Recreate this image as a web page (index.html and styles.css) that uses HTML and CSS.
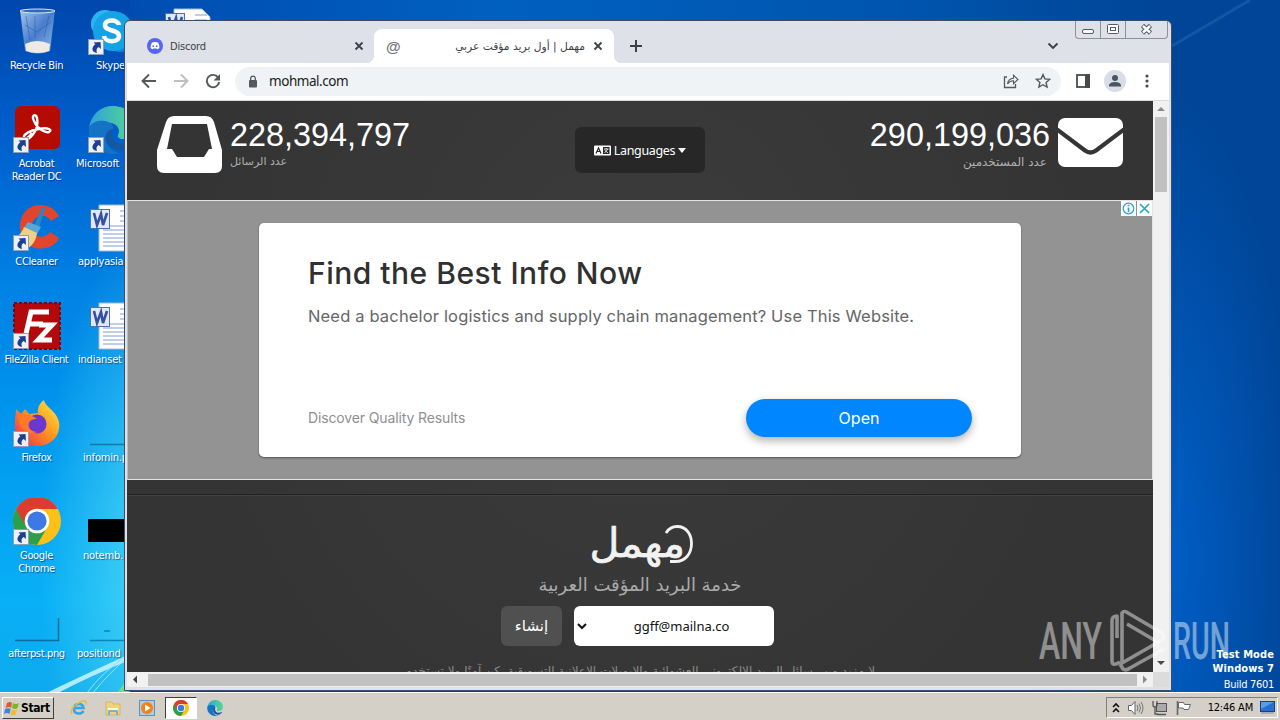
FILE: index.html
```html
<!doctype html>
<html>
<head>
<meta charset="utf-8">
<title>مهمل | أول بريد مؤقت عربي</title>
<link rel="stylesheet" href="styles.css">
</head>
<body>

<!-- shared icons -->
<svg class="defs" width="0" height="0">
<defs>
<linearGradient id="ff" x1="1" y1="0" x2="0" y2="1"><stop offset="0" stop-color="#fff04a"/><stop offset=".45" stop-color="#ff9a1f"/><stop offset="1" stop-color="#f0205a"/></linearGradient>
<linearGradient id="edge" x1="0" y1="0" x2="1" y2="0"><stop offset="0" stop-color="#2ba3dc"/><stop offset="1" stop-color="#58d98a"/></linearGradient>
<linearGradient id="bin" x1="0" y1="0" x2="1" y2="1"><stop offset="0" stop-color="#b9d3f2"/><stop offset=".5" stop-color="#4f83cf"/><stop offset="1" stop-color="#a9c4e8"/></linearGradient>
<symbol id="shortcut" viewBox="0 0 16 16">
<rect width="16" height="16" fill="#8aa0b8"/><rect x="1" y="1" width="14" height="14" fill="#edf1f6"/>
<path d="M5.500 3.500L12.500 3l.5 7-2.300-2C8.500 9 8 11 9 14 3.500 13.500 3 8.500 7.300 5.300z" fill="#1c3f8f"/>
</symbol>
<symbol id="chrome" viewBox="0 0 48 48">
<circle cx="24" cy="24" r="24" fill="#fbc116"/>
<path d="M24 24L3.200 12A24 24 0 0 0 24 48L34.400 30z" fill="#2f9e49"/>
<path d="M3.200 12A24 24 0 0 1 44.800 12H24L13.600 30z" fill="#dc3b2e"/>
<circle cx="24" cy="24" r="12.300" fill="#fff"/><circle cx="24" cy="24" r="9.600" fill="#3c79e6"/>
</symbol>
<symbol id="edgeicon" viewBox="0 0 48 48">
<path d="M1 22C3 8 13 0 25 0c13 0 23 9 23 20 0 8-6 13-13 13-4 0-6-2-5-4 3-5-1-12-8-12-8 0-16 3-21 5z" fill="url(#edge)"/>
<path d="M1 21c4-6 11-7 16-6 8 1 9 7 8 10-6 0-9 5-7 11 3 7 10 12 17 11C20 52-2 42 1 21z" fill="#1473c4"/>
<path d="M18 30c0 9 8 15 16 14 5-1 9-4 12-9-10 6-20 4-22-6-1-3 1-5 2-6-4 0-8 2-8 7z" fill="#1557a0"/>
</symbol>
<symbol id="worddoc" viewBox="0 0 48 48">
<path d="M11 1h28l8 8v38H11z" fill="#fff" stroke="#a8b6d0"/>
<path d="M32 7h12M32 12h12M32 17h12M15 22h29M15 26h29M15 30h29M15 34h29M15 38h29M15 42h29" stroke="#a9bfe4" stroke-width="1.400"/>
<rect x="2.500" y="5.500" width="19" height="19" fill="#dfe9fa" stroke="#4c6fb8"/>
<path d="M6 9l3 12 4-11 2 11 4-12" fill="none" stroke="#34509f" stroke-width="2.600"/>
</symbol>
</defs>
</svg>

<div class="desktop">

<svg class="rays" width="1280" height="720" viewBox="0 0 1280 720">
<path d="M44 694Q90 672 130 654L130 660Q90 676 56 694z" fill="#c9f4ff" opacity=".85"/>
<path d="M86 694Q104 670 128 655M92 694Q110 672 128 657" stroke="#8be6ff" fill="none"/>
<path d="M118 692L128 678V692z" fill="#6fe08a"/>
<path d="M1172 46L1250 0" stroke="#3479bd" stroke-width="3" opacity=".35"/>
</svg>

<div class="icons">
<div class="icon">
<svg width="48" height="48" viewBox="0 0 48 48"><path d="M7 2h35l-5 41q-12 5-25 0z" fill="url(#bin)" opacity=".9"/><ellipse cx="24.500" cy="3" rx="17.500" ry="2" fill="#3468b8" stroke="#dbe7f5"/><path d="M12 36q12-6 25 0l-1 7q-12 4-23 0z" fill="#efeae4"/><path d="M13 8l4 24M22 8v22M36 8l-5 21M12 17l12 7 14-10" stroke="#2859aa" opacity=".5" fill="none"/></svg>
<div class="label">Recycle Bin</div>
</div>
<div class="icon">
<svg width="48" height="48" viewBox="0 0 48 48"><rect x="2" y="0" width="45" height="43" rx="6" fill="#b30b00"/><path d="M12 35c8-4 14-13 12-23-1-5-6-3-3 3 4 9 12 12 15 11 4-2-1-5-10-3-8 1-16 5-15 9 1 3 6-2 8-5" fill="none" stroke="#fff" stroke-width="2.400"/><use href="#shortcut" x="0" y="31" width="16" height="16"/></svg>
<div class="label">Acrobat<br>Reader DC</div>
</div>
<div class="icon">
<svg width="48" height="48" viewBox="0 0 48 48"><path d="M46 12C38-3 14-3 8 15c-5 17 8 33 24 29 7-1 12-5 14-10l-9-6c-5 8-18 6-18-6 0-11 14-14 19-5z" fill="#e2452e"/><path d="M29 3l3 1-6 20-5-2z" fill="#2c86c4"/><path d="M15 18l13 5-4 7-13-6z" fill="#57a9d4"/><path d="M11 23l13 6c-1 7-4 12-9 15L1 35c5-3 8-7 10-12z" fill="#f3cf83"/><use href="#shortcut" x="0" y="31" width="16" height="16"/></svg>
<div class="label">CCleaner</div>
</div>
<div class="icon">
<svg width="48" height="48" viewBox="0 0 48 48"><rect x="1" y="1" width="46" height="46" fill="#b3080c" stroke="#7f0508" stroke-width="2" stroke-dasharray="3 2"/><path d="M12 36L18 10h18M15 22h15M26 23h13L25 38h14" fill="none" stroke="#fff" stroke-width="5"/><use href="#shortcut" x="0" y="31" width="16" height="16"/></svg>
<div class="label">FileZilla Client</div>
</div>
<div class="icon">
<svg width="48" height="48" viewBox="0 0 48 48"><path d="M3 9l5 5 4-5 4 5 9-1C24 7 28 2 31 0c0 6 13 11 15 22 2 14-8 24-22 24S0 35 2 22c0-6 1-9 1-13z" fill="url(#ff)"/><circle cx="24" cy="24" r="9.500" fill="#6a38cf"/><path d="M5 16c8-3 14-1 19 3-4 0-7 1-8 4-2 5 3 9 8 9-10 4-18-4-19-16z" fill="#ff7a24"/><use href="#shortcut" x="0" y="31" width="16" height="16"/></svg>
<div class="label">Firefox</div>
</div>
<div class="icon">
<svg width="48" height="48" viewBox="0 0 48 48"><use href="#chrome" y="-1" width="48" height="48"/><use href="#shortcut" x="0" y="31" width="16" height="16"/></svg>
<div class="label">Google<br>Chrome</div>
</div>
<div class="icon">
<svg width="48" height="48" viewBox="0 0 48 48"><path d="M2 44.500h43.500V22" fill="none" stroke="#0b6c9f" stroke-width="1.500"/></svg>
<div class="label">afterpst.png</div>
</div>
</div>

<div class="icons second">
<div class="icon">
<svg width="48" height="48" viewBox="0 0 48 48"><circle cx="17" cy="16" r="14" fill="#29b6f0"/><circle cx="32" cy="30" r="14" fill="#0a84d8"/><circle cx="25" cy="23" r="20" fill="#15a3e6"/><path d="M31 17c-1-6-14-6-14 0 0 7 14 4 14 11 0 7-14 7-15 0" fill="none" stroke="#fff" stroke-width="4.500"/><use href="#shortcut" x="0" y="31" width="16" height="16"/></svg>
<div class="label">Skype</div>
</div>
<div class="icon">
<svg width="48" height="48" viewBox="0 0 48 48"><use href="#edgeicon" width="48" height="48"/><use href="#shortcut" x="0" y="31" width="16" height="16"/></svg>
<div class="label">Microsoft</div>
</div>
<div class="icon"><svg width="48" height="48"><use href="#worddoc" width="48" height="48"/></svg><div class="label">applyasia</div></div>
<div class="icon"><svg width="48" height="48"><use href="#worddoc" width="48" height="48"/></svg><div class="label">indianset</div></div>
<div class="icon"><svg width="48" height="48"><path d="M2 44.500h46" stroke="#13799f" stroke-width="1.500"/></svg><div class="label">infomin.p</div></div>
<div class="icon"><svg width="48" height="48"><rect y="21" width="48" height="23"/></svg><div class="label">notemb.</div></div>
<div class="icon"><svg width="48" height="48"><path d="M2 44.500h46M16 35h6" stroke="#0b87b5" stroke-width="1.500"/></svg><div class="label">positiond</div></div>
</div>

<svg class="thirdicon" width="48" height="48"><use href="#worddoc" width="48" height="48"/></svg>

<div class="window">
<div class="winbuttons">
<span><svg width="24" height="17"><rect x="6.500" y="8.500" width="11" height="4" rx="1.500" fill="#fff" stroke="#555b66"/></svg></span>
<span><svg width="24" height="17"><rect x="6.500" y="3.500" width="11" height="9" rx="1" fill="#fff" stroke="#555b66"/><rect x="9.500" y="6.500" width="5" height="3" fill="#fff" stroke="#555b66"/></svg></span>
<span class="wide"><svg width="41" height="17"><path d="M16.500 4.500l8 7.500M24.500 4.500l-8 7.500" stroke="#555b66" stroke-width="4.500"/><path d="M17 5l7 6.500M24 5l-7 6.500" stroke="#fff" stroke-width="2.400"/></svg></span>
</div>
<div class="tabs">
<div class="tab">
<svg width="16" height="16" viewBox="0 0 16 16"><circle cx="8" cy="8" r="8" fill="#5865f2"/><path d="M5 4.500q3-1 6 0 1.500 2.500 1.500 5.500-1 1-2.500 1.200l-.6-1q-1.400.4-2.800 0l-.6 1Q4.500 11 3.500 10q0-3 1.500-5.500z" fill="#fff"/><circle cx="6.300" cy="8.200" r=".9" fill="#5865f2"/><circle cx="9.700" cy="8.200" r=".9" fill="#5865f2"/></svg>
<span class="title">Discord</span>
<svg width="10" height="10"><path d="M1.500 1.500l7 7M8.500 1.500l-7 7" stroke="#3c4043" stroke-width="1.800"/></svg>
</div>
<div class="tab active">
<span class="at">@</span>
<span class="title" dir="rtl">مهمل | أول بريد مؤقت عربي</span>
<svg width="10" height="10"><path d="M1.500 1.500l7 7M8.500 1.500l-7 7" stroke="#3c4043" stroke-width="1.800"/></svg>
</div>
<svg class="plus" width="14" height="14"><path d="M7 1v12M1 7h12" stroke="#3c4043" stroke-width="2"/></svg>
<svg class="chev" width="12" height="8"><path d="M1.500 1.500L6 6l4.500-4.500" fill="none" stroke="#3c4043" stroke-width="1.900"/></svg>
</div>
<div class="toolbar">
<svg width="16" height="16"><path d="M15 8H2M8 1.500L1.500 8 8 14.500" fill="none" stroke="#55585c" stroke-width="1.900"/></svg>
<svg width="16" height="16"><path d="M1 8h13M8 1.500L14.500 8 8 14.500" fill="none" stroke="#bdbfc1" stroke-width="1.900"/></svg>
<svg width="16" height="16"><path d="M13.300 4.700A6.200 6.200 0 1 0 14.200 9" fill="none" stroke="#55585c" stroke-width="1.900"/><path d="M15 1v6.500H8.500z" fill="#55585c"/></svg>
<div class="address">
<svg width="10" height="13"><rect x="1" y="5" width="8" height="7.500" rx="1" fill="#55585c"/><path d="M2.700 5.500V3.500a2.300 2.300 0 0 1 4.600 0v2" fill="none" stroke="#55585c" stroke-width="1.300"/></svg>
<span class="url">mohmal.com</span>
<svg width="16" height="16"><path d="M4 4H1.500v10.500h11V11" fill="none" stroke="#55585c" stroke-width="1.300"/><path d="M4.500 11c.5-4 3-5.500 6-5.700V2.200L15 6.500l-4.500 4.200V7.800c-2.500 0-4.500 1-6 3.200z" fill="none" stroke="#55585c" stroke-width="1.100"/></svg>
<svg width="16" height="16"><path d="M8 1.600l1.900 4.300 4.700.5-3.500 3.100 1 4.600L8 11.700l-4.100 2.400 1-4.600L1.400 6.400l4.700-.5z" fill="none" stroke="#55585c" stroke-width="1.400"/></svg>
</div>
<svg width="14" height="14"><rect x="1" y="1" width="12" height="12" fill="none" stroke="#474b50" stroke-width="1.800"/><rect x="9" y="0" width="5" height="14" fill="#474b50"/></svg>
<svg class="person" width="22" height="22"><circle cx="11" cy="11" r="11" fill="#d9dde5"/><circle cx="11" cy="8" r="3" fill="#4c5360"/><path d="M5 16.500V15q1-3 6-3t6 3v1.500z" fill="#4c5360"/></svg>
<svg width="4" height="14"><circle cx="2" cy="2" r="1.600" fill="#474b50"/><circle cx="2" cy="7" r="1.600" fill="#474b50"/><circle cx="2" cy="12" r="1.600" fill="#474b50"/></svg>
</div>

<div class="view">
<div class="page">
<div class="header">
<div class="stat">
<svg width="65" height="57"><path d="M17 0h32q6 0 8 6l8 28v16q0 7-7 7H7q-7 0-7-7V34L9 6q2-6 8-6zM15 8L10 33h5l5 8h27l5-8h3L50 8z" fill="#fff" fill-rule="evenodd"/></svg>
<div><div class="num">228,394,797</div><div class="cap" dir="rtl">عدد الرسائل</div></div>
</div>
<div class="lang">
<svg width="17" height="11"><rect width="17" height="10" y=".5" rx="1" fill="#fff"/><path d="M2 8.500L4.500 3 7 8.500M3 6.500h3" fill="none" stroke="#272727" stroke-width="1.200"/><rect x="9" y="2" width="6.500" height="7" fill="#272727"/><path d="M10 4h4.500M12.200 3v1M10.500 8l3.500-4M10.500 5l3.500 3" stroke="#fff" stroke-width=".8"/></svg>
<span>Languages</span>
<svg width="8" height="5"><path d="M0 0h8L4 5z" fill="#fff"/></svg>
</div>
<div class="stat right">
<div><div class="num">290,199,036</div><div class="cap" dir="rtl">عدد المستخدمين</div></div>
<svg width="65" height="49"><rect width="65" height="49" rx="7" fill="#fff"/><path d="M-1 11.500L27 32.500Q32.500 36.500 38 32.500L66 11.500" fill="none" stroke="#353535" stroke-width="4.200"/></svg>
</div>
</div>

<div class="ad">
<div class="adchoices">
<svg width="15" height="15"><circle cx="7.500" cy="7.500" r="5.300" fill="none" stroke="#18a8cf" stroke-width="1.200"/><path d="M7.500 6.500v4.500M7.500 3.800v1.500" stroke="#18a8cf" stroke-width="1.600"/></svg>
<svg width="15" height="15"><path d="M3 3l9 9M12 3l-9 9" stroke="#18a8cf" stroke-width="1.600"/></svg>
</div>
<div class="card">
<h1>Find the Best Info Now</h1>
<p>Need a bachelor logistics and supply chain management? Use This Website.</p>
<div class="foot"><span>Discover Quality Results</span><a class="open">Open</a></div>
</div>
</div>

<div class="main">
<div class="logo"><span dir="rtl">مهمل</span><svg width="28" height="40"><path d="M1 9Q5 2.500 12 2.500C22 2.500 26.500 11 26.500 19.500c0 10-6 18-16 18H5" fill="none" stroke="#f2f2f2" stroke-width="2.800"/></svg></div>
<div class="sub" dir="rtl">خدمة البريد المؤقت العربية</div>
<div class="form">
<div class="create">إنشاء</div>
<div class="mail"><svg width="10" height="7"><path d="M1 1l4 4 4-4" fill="none" stroke="#111" stroke-width="2"/></svg><span>ggff@mailna.co</span></div>
</div>
<div class="note" dir="rtl">لا مزيد من رسائل البريد الإلكتروني العشوائية والإيميلات الإعلانية التسويقية. كن آمنًا ولا تستخدم</div>
</div>
</div>
<div class="vscroll">
<svg width="16" height="16"><path d="M4 10l4-4 4 4z" fill="#8a8a8a"/></svg>
<div class="thumb"></div>
<svg class="down" width="16" height="16"><path d="M4 5l4 4 4-4z" fill="#4a4a4a"/></svg>
</div>
</div>
<div class="hscroll">
<svg width="21" height="15"><path d="M10 3.500v8l-4-4z" fill="#444"/></svg>
<div class="bar"></div>
<svg width="16" height="15"><path d="M6 3.500v8l4-4z" fill="#8a8a8a"/></svg>
<div class="corner"></div>
</div>
</div>

<svg class="watermark" width="200" height="70" viewBox="0 0 200 70">
<text x="3" y="52" textLength="63" lengthAdjust="spacingAndGlyphs">ANY</text>
<g fill="none" stroke="#fff" stroke-width="3.600" stroke-linejoin="round">
<path d="M81 31V9Q76 9 76 14V54Q76 60 84 55"/>
<path d="M86 50V6Q88 3 92 6L126 26Q130 30 126 33L86 56V48"/>
<path d="M91 17L120 34M84 57L87 62Q90 64 94 61L128 42"/>
</g>
<text x="137" y="52" textLength="57" lengthAdjust="spacingAndGlyphs">RUN</text>
</svg>

<div class="build"><b>Test Mode</b><b>Windows 7</b><span>Build 7601</span></div>

<div class="taskbar">
<div class="start">
<svg width="17" height="16"><path d="M3 3q3-2 5 0L7 8Q5 6 1.500 8z" fill="#e6552b"/><path d="M9 3q3 2 6 0l-1.500 5Q11 10 8 8z" fill="#76b82a"/><path d="M1.200 9Q4 7.500 6.700 9l-1.200 5Q3 12 0 14z" fill="#3b86d8"/><path d="M7.700 9.200q3 2 5.600 0l-1.500 5q-2.500 1.800-5.300 0z" fill="#f6bd1e"/></svg>
<b>Start</b>
</div>
<div class="quick">
<svg width="18" height="18"><path d="M4 9h9.500q-.5-4-4.500-4-5 0-5 5 0 4.500 5 4.500 3 0 4.500-2.500" fill="none" stroke="#3aa5e4" stroke-width="2.600"/><path d="M2 15Q-1 11 7 5q7-5 9-2 .5 1-.5 2.500" fill="none" stroke="#e8b93a" stroke-width="1.400"/></svg>
<svg width="18" height="18"><path d="M2 3h6l1 2h7v11H2z" fill="#efd479" stroke="#c9a446" stroke-width=".6"/><path d="M4 9h10v3H4z" fill="#fff8cf"/><path d="M4 16v-4q0-1 1-1h8q1 0 1 1v4h-2v-3H6v3z" fill="#6fb4dc"/></svg>
<svg width="18" height="18"><rect x="1.500" y="1.500" width="15" height="15" fill="#a9cdea" stroke="#5b93bf"/><circle cx="9" cy="9" r="6" fill="#f58113"/><path d="M7 5.500v7L12.500 9z" fill="#fff"/></svg>
</div>
<div class="task"><svg width="16" height="16"><use href="#chrome" width="16" height="16"/></svg></div>
<svg width="16" height="16"><use href="#edgeicon" width="16" height="16"/></svg>
<div class="tray">
<svg width="8" height="12"><path d="M1 5l3-3 3 3M1 10l3-3 3 3" fill="none" stroke="#111" stroke-width="1.600"/></svg>
<svg width="17" height="16"><path d="M1.500 5.500h3L8 1.500v13l-3.500-4h-3z" fill="#fff" stroke="#666"/><path d="M10 5q2 3 0 6M12 3.500q3 4.500 0 9M14 2q4 6 0 12" fill="none" stroke="#777"/></svg>
<svg width="17" height="16"><rect x="5.500" y="3.500" width="10" height="8" fill="#aaa" stroke="#555"/><path d="M6 14.500h9M2 1v4q0 2 2 2t2-2V1M4 7v7h3" fill="none" stroke="#555" stroke-width="1.300"/></svg>
<svg width="17" height="16"><path d="M2.500 1v14" stroke="#666" stroke-width="1.600"/><path d="M3.500 2.500h5l1 2h6l-2 5H9l-1-1.500H3.500z" fill="#fff" stroke="#666"/></svg>
<span class="clock">12:46 AM</span>
<svg width="15" height="13"><rect x=".5" y=".5" width="14" height="10" fill="#2a6fce" stroke="#183f83"/><path d="M1 1h13L1 8z" fill="#5d9ae8"/><path d="M1 12h13" stroke="#7a8aa0"/></svg>
</div>
</div>

</div>
</body>
</html>
```
FILE: styles.css
```css
body {
    margin: 0;
    font-family: "DejaVu Sans Condensed", "DejaVu Sans", sans-serif;
    font-size: 11px;
}
svg {
    display: block;
    flex: none;
}
.defs {
    position: absolute;
}
.desktop {
    position: relative;
    width: 1280px;
    height: 720px;
    overflow: hidden;
    background: radial-gradient(ellipse 110px 330px at 150px 560px, rgba(90, 225, 245, .75), transparent) 0 0 / 130px 720px no-repeat,
        linear-gradient(180deg, #0046ac 0, #0062cf 150px, #0082e4 290px, #0096ee 420px, #08b0f6 600px, #0ea9ee 692px) 0 0 / 130px 720px no-repeat,
        linear-gradient(90deg, #0046ac 0, #0060c0 500px, #0055ae 900px, transparent 1160px) 0 0 / 1280px 24px no-repeat,
        radial-gradient(ellipse 140px 480px at 1160px 560px, #0060c8, #004597);
}
.rays {
    position: absolute;
    left: 0;
    top: 0;
}

/* desktop icons */
.icons {
    position: absolute;
    left: -1px;
    top: 0;
    width: 75px;
}
.icons.second {
    left: 74px;
}
.icon {
    height: 90px;
    padding-top: 8px;
}
.icon svg {
    margin: 0 auto 3px;
}
.label {
    color: #fff;
    line-height: 13px;
    text-align: center;
    white-space: nowrap;
    letter-spacing: -0.35px;
    text-shadow: 1px 1px 1px rgba(0, 30, 90, .6);
}
.second .label {
    text-align: left;
    padding-left: 4px;
    letter-spacing: -0.2px;
}
.second .icon:nth-child(1) .label {
    padding-left: 22px;
}
.second .icon:nth-child(2) .label {
    padding-left: 2px;
}
.second .icon:nth-child(n+5) .label {
    padding-left: 9px;
}
.second .icon:nth-child(7) .label {
    padding-left: 3px;
}
.thirdicon {
    position: absolute;
    left: 163px;
    top: 8px;
}

/* browser window */
.window {
    position: absolute;
    left: 124px;
    top: 20px;
    width: 1042px;
    height: 667px;
    padding: 1px 2px 1px 2px;
    background: #dee1e8;
    border: 1px solid #3c4d68;
    border-radius: 6px 6px 0 0;
}
.winbuttons {
    position: absolute;
    right: 3px;
    top: 0;
    display: flex;
    border: 1px solid #8b9099;
    border-top: 0;
    border-radius: 0 0 4px 4px;
}
.winbuttons span + span {
    border-left: 1px solid #8b9099;
}
.tabs {
    display: flex;
    align-items: flex-end;
    height: 41px;
    color: #3c4043;
}
.tab {
    display: flex;
    align-items: center;
    box-sizing: border-box;
    width: 247px;
    height: 34px;
    padding: 0 10px 0 20px;
}
.title {
    flex: 1;
    margin: 0 8px 0 7px;
    letter-spacing: -0.2px;
    white-space: nowrap;
}
.active {
    position: relative;
    width: 240px;
    padding: 0 11px 0 12px;
    background: #fff;
    border-radius: 8px 8px 0 0;
}
.active:before,
.active:after {
    content: "";
    position: absolute;
    bottom: 0;
    width: 8px;
    height: 8px;
}
.active:before {
    left: -8px;
    background: radial-gradient(circle at 0 0, transparent 8px, #fff 8.5px);
}
.active:after {
    right: -8px;
    background: radial-gradient(circle at 100% 0, transparent 8px, #fff 8.5px);
}
.active .title {
    font-family: "DejaVu Sans", sans-serif;
    font-size: 10.7px;
    letter-spacing: 0;
}
.at {
    width: 16px;
    font: bold 15px "Liberation Sans", sans-serif;
    color: #74777b;
}
.plus {
    margin: 0 0 10px 15px;
}
.chev {
    margin: 0 110px 13px auto;
}
.toolbar {
    display: flex;
    align-items: center;
    box-sizing: border-box;
    height: 38px;
    padding: 0 20px 1px 14px;
    background: #fff;
    border-bottom: 1px solid #d8dadd;
}
.toolbar > svg {
    margin-right: 16px;
}
.address {
    display: flex;
    align-items: center;
    flex: 1;
    height: 29px;
    margin-right: 15px;
    margin-left: -2px;
    padding: 0 10px 0 13px;
    border-radius: 15px;
    background: #f0f3f5;
    gap: 16px;
}
.url {
    flex: 1;
    margin-left: -5px;
    font-family: "Noto Sans", sans-serif;
    font-size: 13.5px;
    letter-spacing: -0.45px;
    color: #202124;
}
.toolbar > .person {
    margin: 0 19px 0 -2px;
}
.toolbar > svg:last-child {
    margin: 0;
}
.view {
    display: flex;
    height: 571px;
}
.page {
    width: 1026px;
    overflow: hidden;
    background: radial-gradient(ellipse 450px 500px at 513px 200px, #3c3c3c, #343434);
}
.header {
    display: flex;
    justify-content: space-between;
    box-sizing: border-box;
    height: 99px;
    padding: 15px 30px 0;
    color: #fff;
}
.stat {
    display: flex;
    width: 260px;
    gap: 8px;
}
.right {
    justify-content: flex-end;
    text-align: right;
}
.right svg {
    margin-top: 2px;
}
.num {
    margin-top: 2px;
    font: 32.4px/34px "Liberation Sans", Arial, sans-serif;
}
.cap {
    padding-right: 3px;
    font-family: "DejaVu Sans", sans-serif;
    font-size: 11.5px;
    line-height: 20px;
    color: #b0b0b0;
}
.stat:first-child .cap {
    font-size: 11px;
    text-align: left;
}
.right .cap {
    font-size: 12px;
    text-align: right;
}
.lang {
    display: flex;
    align-items: center;
    justify-content: center;
    gap: 3px;
    width: 130px;
    height: 46px;
    margin-top: 11px;
    background: #272727;
    border-radius: 6px;
    font-family: "Noto Sans", sans-serif;
    font-size: 12.5px;
    letter-spacing: -0.35px;
}

/* ad block */
.ad {
    position: relative;
    box-sizing: border-box;
    height: 280px;
    padding: 22px 131px 0;
    border: 1px solid #e4e4e4;
    border-left-color: #bbb;
    background: #939393;
}
.adchoices {
    position: absolute;
    top: 0;
    right: 0;
    display: flex;
    gap: 1px;
}
.adchoices svg {
    background: #fff;
}
.card {
    box-sizing: border-box;
    height: 234px;
    padding: 31px 49px 0;
    background: #fff;
    border-radius: 5px;
    box-shadow: 0 1px 2px rgba(0, 0, 0, .45);
    font-family: Inter, Roboto, sans-serif;
}
.card h1 {
    margin: 0;
    font-size: 30px;
    font-weight: 500;
    line-height: 38px;
    letter-spacing: 0.5px;
    color: #303030;
    white-space: nowrap;
}
.card p {
    margin: 12px 0 0;
    font-size: 16.5px;
    line-height: 24px;
    letter-spacing: 0.16px;
    color: #666;
    white-space: nowrap;
}
.foot {
    display: flex;
    align-items: center;
    justify-content: space-between;
    margin-top: 71px;
    font-size: 14px;
    letter-spacing: -0.13px;
    color: #909090;
}
.foot span {
    padding-bottom: 2px;
}
.open {
    width: 226px;
    border-radius: 19px;
    background: #0087ff;
    box-shadow: 0 4px 8px rgba(0, 0, 0, .3);
    color: #fff;
    font-size: 16px;
    line-height: 38px;
    letter-spacing: 0;
    text-align: center;
}

/* mail form */
.main {
    display: flex;
    flex-direction: column;
    align-items: center;
    margin-top: 14px;
    border-top: 1px solid #222;
    box-shadow: inset 0 1px #424242;
}
.logo {
    display: flex;
    justify-content: flex-end;
    width: 106px;
    height: 44px;
    margin-top: 29px;
    color: #f2f2f2;
}
.logo span {
    font-family: "DejaVu Sans", sans-serif;
    font-size: 41px;
    line-height: 38px;
    -webkit-text-stroke: 0.7px #f2f2f2;
}
.logo svg {
    margin-left: -20px;
}
.sub {
    height: 38px;
    font-family: "DejaVu Sans", sans-serif;
    font-size: 18px;
    line-height: 33px;
    color: #aaa;
}
.form {
    display: flex;
    gap: 12px;
    margin-right: 5px;
    font-size: 14px;
    line-height: 40px;
    text-align: center;
}
.create {
    width: 61px;
    border-radius: 6px;
    background: #505050;
    color: #fff;
    font-family: "DejaVu Sans", sans-serif;
    font-size: 15px;
}
.mail {
    display: flex;
    align-items: center;
    box-sizing: border-box;
    width: 200px;
    padding: 0 3px;
    border-radius: 6px;
    background: #fff;
    color: #111;
    font-family: "Noto Sans", sans-serif;
    font-size: 13px;
}
.mail span {
    flex: 1;
    padding-left: 5px;
}
.note {
    margin-top: 14px;
    font-family: "DejaVu Sans", sans-serif;
    font-size: 12px;
    line-height: 22px;
    color: #8b8b8b;
    white-space: nowrap;
}

.vscroll {
    display: flex;
    flex-direction: column;
    width: 16px;
    background: #f1f1f1;
}
.thumb {
    height: 75px;
    margin: 0 2px;
    background: #c1c1c1;
}
.down {
    margin-top: auto;
}
.hscroll {
    display: flex;
    height: 15px;
    background: #f1f1f1;
}
.bar {
    flex: 1;
    margin: 2px 0 1px;
    background: #c1c1c1;
}
.corner {
    width: 16px;
    background: #dcdcdc;
}

.watermark {
    position: absolute;
    left: 1036px;
    top: 607px;
    opacity: .45;
    font: 500 52px Roboto, sans-serif;
    fill: #fff;
}
.build {
    position: absolute;
    right: 6px;
    top: 648px;
    display: flex;
    flex-direction: column;
    color: #fff;
    line-height: 14px;
    text-align: right;
    letter-spacing: -0.3px;
}
.build b {
    letter-spacing: 0.1px;
}
.build span {
    margin-top: 2px;
}

.taskbar {
    position: absolute;
    left: 0;
    bottom: 0;
    display: flex;
    align-items: center;
    box-sizing: border-box;
    width: 1280px;
    height: 28px;
    padding: 2px 2px 0;
    background: #d4d0c8;
    border-top: 1px solid #fff;
}
.start {
    display: flex;
    align-items: center;
    box-sizing: border-box;
    width: 52px;
    height: 22px;
    padding-left: 1px;
    border: 1px solid;
    border-color: #fff #404040 #404040 #fff;
    font-size: 12px;
    letter-spacing: -0.4px;
}
.quick {
    display: flex;
    gap: 16px;
    padding: 0 9px 0 16px;
}
.task {
    box-sizing: border-box;
    width: 32px;
    height: 22px;
    margin-right: 10px;
    padding: 2px 7px;
    border: 1px solid;
    border-color: #404040 #fff #fff #404040;
    background: #fff;
}
.tray {
    display: flex;
    align-items: center;
    box-sizing: border-box;
    width: 172px;
    height: 21px;
    margin-left: auto;
    padding: 0 2px 0 5px;
    gap: 7px;
    border: 1px solid;
    border-color: #808080 #fff #fff #808080;
}
.clock {
    margin-left: auto;
    letter-spacing: -0.2px;
    white-space: nowrap;
}
```
